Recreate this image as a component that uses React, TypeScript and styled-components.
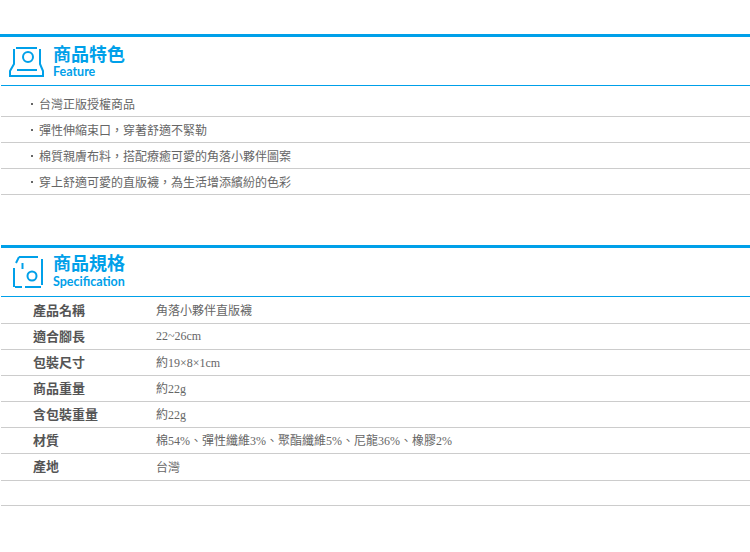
import React from "react";
import styled, { createGlobalStyle } from "styled-components";

const features = [
  "台灣正版授權商品",
  "彈性伸縮束口，穿著舒適不緊勒",
  "棉質親膚布料，搭配療癒可愛的角落小夥伴圖案",
  "穿上舒適可愛的直版襪，為生活增添繽紛的色彩",
];

const specs = [
  ["產品名稱", "角落小夥伴直版襪"],
  ["適合腳長", "22~26cm"],
  ["包裝尺寸", "約19×8×1cm"],
  ["商品重量", "約22g"],
  ["含包裝重量", "約22g"],
  ["材質", "棉54%、彈性纖維3%、聚酯纖維5%、尼龍36%、橡膠2%"],
  ["產地", "台灣"],
];

const FeatureIcon = () => (
  <svg width="35" height="31" viewBox="0 0 35 31" fill="none" stroke="#00a0e9" strokeWidth="2">
    <path d="M7 1h21" />
    <path d="M5 2v15l-4 7v5" />
    <path d="M31 2v15l3 7v5" />
    <path d="M0 29h35" />
    <path d="M8 23h20" />
    <circle cx="19" cy="10" r="5" />
  </svg>
);

const SpecIcon = () => (
  <svg width="31" height="33" viewBox="0 0 31 33" fill="none" stroke="#00a0e9" strokeWidth="2">
    <path d="M6 1h19" />
    <path d="M6 1L3 7" />
    <path d="M1 12v19" />
    <path d="M9.5 7v6" />
    <path d="M29 3v26" />
    <path d="M2 31h7" />
    <path d="M12 31h16" />
    <circle cx="19" cy="20" r="4.5" />
  </svg>
);

const App: React.FunctionComponent = () => {
  return (
    <Page>
      <GlobalStyle />
      <Section>
        <Heading>
          <IconSlot $left={8} $top={2}>
            <FeatureIcon />
          </IconSlot>
          <Titles>
            <ZhTitle>商品特色</ZhTitle>
            <EnTitle>Feature</EnTitle>
          </Titles>
        </Heading>
        <FeatureList>
          {features.map((f) => (
            <FeatureRow key={f}>
              <Bullet />
              {f}
            </FeatureRow>
          ))}
        </FeatureList>
      </Section>
      <SpecSection>
        <SpecHeading>
          <IconSlot $left={12} $top={0}>
            <SpecIcon />
          </IconSlot>
          <SpecTitles>
            <ZhTitle>商品規格</ZhTitle>
            <EnTitle>Specification</EnTitle>
          </SpecTitles>
        </SpecHeading>
        <SpecList>
          {specs.map(([k, v], i) => (
            <SpecRow key={k} $tall={i === specs.length - 1}>
              <SpecKey>{k}</SpecKey>
              <SpecValue>{v}</SpecValue>
            </SpecRow>
          ))}
          <SpecRow $blank />
        </SpecList>
      </SpecSection>
    </Page>
  );
};

const GlobalStyle = createGlobalStyle`
  body {
    margin: 0;
    background: #fff;
    font-family: "Liberation Serif", "Noto Sans CJK TC", serif;
  }
`;
const Page = styled.div`
  width: 750px;
  height: 552px;
  padding-top: 34px;
  box-sizing: border-box;
  overflow: hidden;
`;
const Section = styled.section`
  border-top: 3px solid #00a0e9;
`;
const SpecSection = styled(Section)`
  margin: 50px 0 0 1px;
`;
const Heading = styled.div`
  display: flex;
  align-items: center;
  height: 49px;
  box-sizing: border-box;
  margin-left: 1px;
  border-bottom: 1px solid #00a0e9;
`;
const SpecHeading = styled(Heading)`
  margin-left: 0;
`;
const IconSlot = styled.div<{ $left: number; $top: number }>`
  display: flex;
  width: 52px;
  box-sizing: border-box;
  padding-left: ${(p) => p.$left}px;
  padding-top: ${(p) => p.$top}px;
`;
const Titles = styled.div`
  display: flex;
  flex-direction: column;
  gap: 1px;
  padding-bottom: 1px;
`;
const SpecTitles = styled(Titles)`
  gap: 2px;
  padding-bottom: 4px;
`;
const ZhTitle = styled.div`
  font-family: "Noto Sans CJK TC", sans-serif;
  font-size: 18px;
  font-weight: 700;
  line-height: 20px;
  color: #00a0e9;
`;
const EnTitle = styled.div`
  font-family: "Lato", sans-serif;
  font-size: 12.5px;
  font-weight: 700;
  line-height: 15px;
  color: #00a0e9;
`;
const FeatureList = styled.div`
  padding-top: 5px;
  margin-left: 1px;
`;
const FeatureRow = styled.div`
  display: flex;
  align-items: center;
  gap: 4px;
  height: 26px;
  box-sizing: border-box;
  padding: 1px 0 0 30px;
  font-size: 12px;
  color: #666;
  border-bottom: 1px solid #ccc;
`;
const Bullet = styled.span`
  width: 2px;
  height: 2px;
  margin-right: 2px;
  background: #666;
`;
const SpecList = styled.div`
  padding-top: 1px;
`;
const SpecRow = styled.div<{ $tall?: boolean; $blank?: boolean }>`
  display: flex;
  align-items: center;
  height: ${(p) => (p.$tall ? "27px" : p.$blank ? "25px" : "26px")};
  box-sizing: border-box;
  padding-bottom: 1px;
  border-bottom: 1px solid #ccc;
`;
const SpecKey = styled.div`
  width: 155px;
  padding: 0 0 2px 32px;
  box-sizing: border-box;
  font-size: 13px;
  font-weight: 700;
  color: #555;
`;
const SpecValue = styled.div`
  font-size: 12px;
  color: #666;
`;

export default App;
